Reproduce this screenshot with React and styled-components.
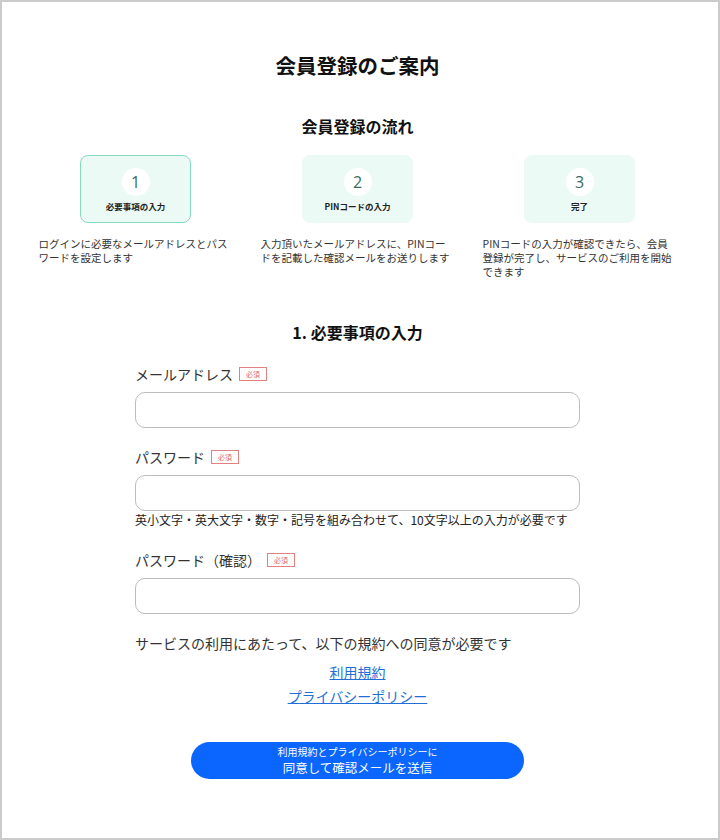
import React from 'react'
import styled, { createGlobalStyle } from 'styled-components'

const GlobalStyle = createGlobalStyle`
  html, body {
    margin: 0;
    padding: 0;
    background: #fff;
  }
  body {
    font-family: "Noto Sans CJK JP", "Noto Sans", sans-serif;
    color: #222;
  }
  * { box-sizing: border-box; }
`

const steps = [
  { no: 1, label: '必要事項の入力', text: 'ログインに必要なメールアドレスとパスワードを設定します', active: true },
  { no: 2, label: 'PINコードの入力', text: '入力頂いたメールアドレスに、PINコードを記載した確認メールをお送りします' },
  { no: 3, label: '完了', text: 'PINコードの入力が確認できたら、会員登録が完了し、サービスのご利用を開始できます' },
]

const fields = [
  { label: 'メールアドレス', type: 'email' },
  { label: 'パスワード', type: 'password', hint: '英小文字・英大文字・数字・記号を組み合わせて、10文字以上の入力が必要です' },
  { label: 'パスワード（確認）', type: 'password' },
]

const App = () => {
  return (
    <Frame>
      <GlobalStyle />
      <Title>会員登録のご案内</Title>
      <SectionTitle>会員登録の流れ</SectionTitle>
      <Steps>
        {steps.map((s) => (
          <Step key={s.no}>
            <StepCard $active={s.active}>
              <StepNo>{s.no}</StepNo>
              <StepLabel>{s.label}</StepLabel>
            </StepCard>
            <StepText>{s.text}</StepText>
          </Step>
        ))}
      </Steps>

      <FormTitle>1. 必要事項の入力</FormTitle>
      <Form>
        {fields.map((f) => (
          <Field key={f.label}>
            <Label>
              {f.label}
              <Required>必須</Required>
            </Label>
            <Input type={f.type} />
            {f.hint && <Hint>{f.hint}</Hint>}
          </Field>
        ))}
        <Agree>サービスの利用にあたって、以下の規約への同意が必要です</Agree>
        <Links>
          <Link href="#">利用規約</Link>
          <Link href="#">プライバシーポリシー</Link>
        </Links>
      </Form>
      <Submit type="button">
        <small>利用規約とプライバシーポリシーに</small>
        <span>同意して確認メールを送信</span>
      </Submit>
    </Frame>
  )
}

export default App

const Frame = styled.div`
  width: 720px;
  height: 840px;
  border: 2px solid #cbcbcb;
  padding: 49px 5px 0 0;
  display: flex;
  flex-direction: column;
  align-items: center;
  overflow: hidden;
`

const Title = styled.h1`
  margin: 0;
  font-size: 20.5px;
  line-height: 28px;
  font-weight: 700;
  color: #111;
`

const SectionTitle = styled.h2`
  margin: 36px 0 0;
  font-size: 16px;
  line-height: 22px;
  font-weight: 700;
  color: #111;
`

const Steps = styled.div`
  margin-top: 18px;
  display: grid;
  grid-template-columns: repeat(3, 222px);
`

const Step = styled.div`
  display: flex;
  flex-direction: column;
  align-items: center;
`

const StepCard = styled.div`
  width: 111px;
  height: 68px;
  border-radius: 8px;
  background: #ecfaf5;
  border: 1px solid ${(p) => (p.$active ? '#86dbbd' : '#ecfaf5')};
  display: flex;
  flex-direction: column;
  align-items: center;
  padding-top: 12px;
`

const StepNo = styled.div`
  width: 28px;
  height: 28px;
  border-radius: 50%;
  background: #fff;
  display: flex;
  align-items: center;
  justify-content: center;
  font-family: "Open Sans", "Noto Sans", sans-serif;
  font-size: 16px;
  color: #3b6a5e;
`

const StepLabel = styled.div`
  margin-top: 4px;
  font-size: 8.5px;
  line-height: 12px;
  font-weight: 700;
  color: #222;
`

const StepText = styled.p`
  align-self: flex-start;
  margin: 14px 0 0 14px;
  width: 192px;
  font-size: 10.5px;
  line-height: 14px;
  color: #333;
`

const FormTitle = styled.h2`
  margin: 42px 0 0;
  font-size: 16px;
  line-height: 22px;
  font-weight: 700;
  color: #111;
`

const Form = styled.div`
  width: 445px;
  margin-top: 21px;
  display: flex;
  flex-direction: column;
`

const Field = styled.div`
  display: flex;
  flex-direction: column;
  margin-bottom: 19px;
`

const Label = styled.label`
  display: flex;
  align-items: center;
  font-size: 14px;
  line-height: 20px;
  color: #333;
  margin-bottom: 8px;
`

const Required = styled.span`
  margin-left: 6px;
  border: 1px solid #e58080;
  color: #e06a6a;
  font-size: 7px;
  line-height: 10px;
  padding: 1px 6px;
`

const Input = styled.input`
  width: 100%;
  height: 36px;
  border: 1px solid #bdbdbd;
  border-radius: 10px;
  padding: 0 12px;
  font-size: 14px;
  outline: none;
  background: #fff;
`

const Hint = styled.p`
  margin: 0 0 3px;
  font-size: 12px;
  line-height: 17px;
  color: #222;
`

const Agree = styled.p`
  margin: 0;
  font-size: 14px;
  line-height: 20px;
  color: #333;
`

const Links = styled.div`
  margin-top: 9px;
  display: flex;
  flex-direction: column;
  align-items: center;
  gap: 4px;
`

const Link = styled.a`
  font-size: 14px;
  line-height: 20px;
  color: #1f6fd6;
  text-decoration: underline;
`

const Submit = styled.button`
  margin-top: 36px;
  width: 333px;
  height: 37px;
  padding: 0;
  border: none;
  border-radius: 19px;
  background: #0a66ff;
  color: #fff;
  font-family: "Noto Sans CJK JP", sans-serif;
  display: flex;
  flex-direction: column;
  align-items: center;
  justify-content: center;
  cursor: pointer;

  small {
    font-size: 10px;
    line-height: 14px;
  }
  span {
    font-size: 12.5px;
    line-height: 17px;
  }
`
